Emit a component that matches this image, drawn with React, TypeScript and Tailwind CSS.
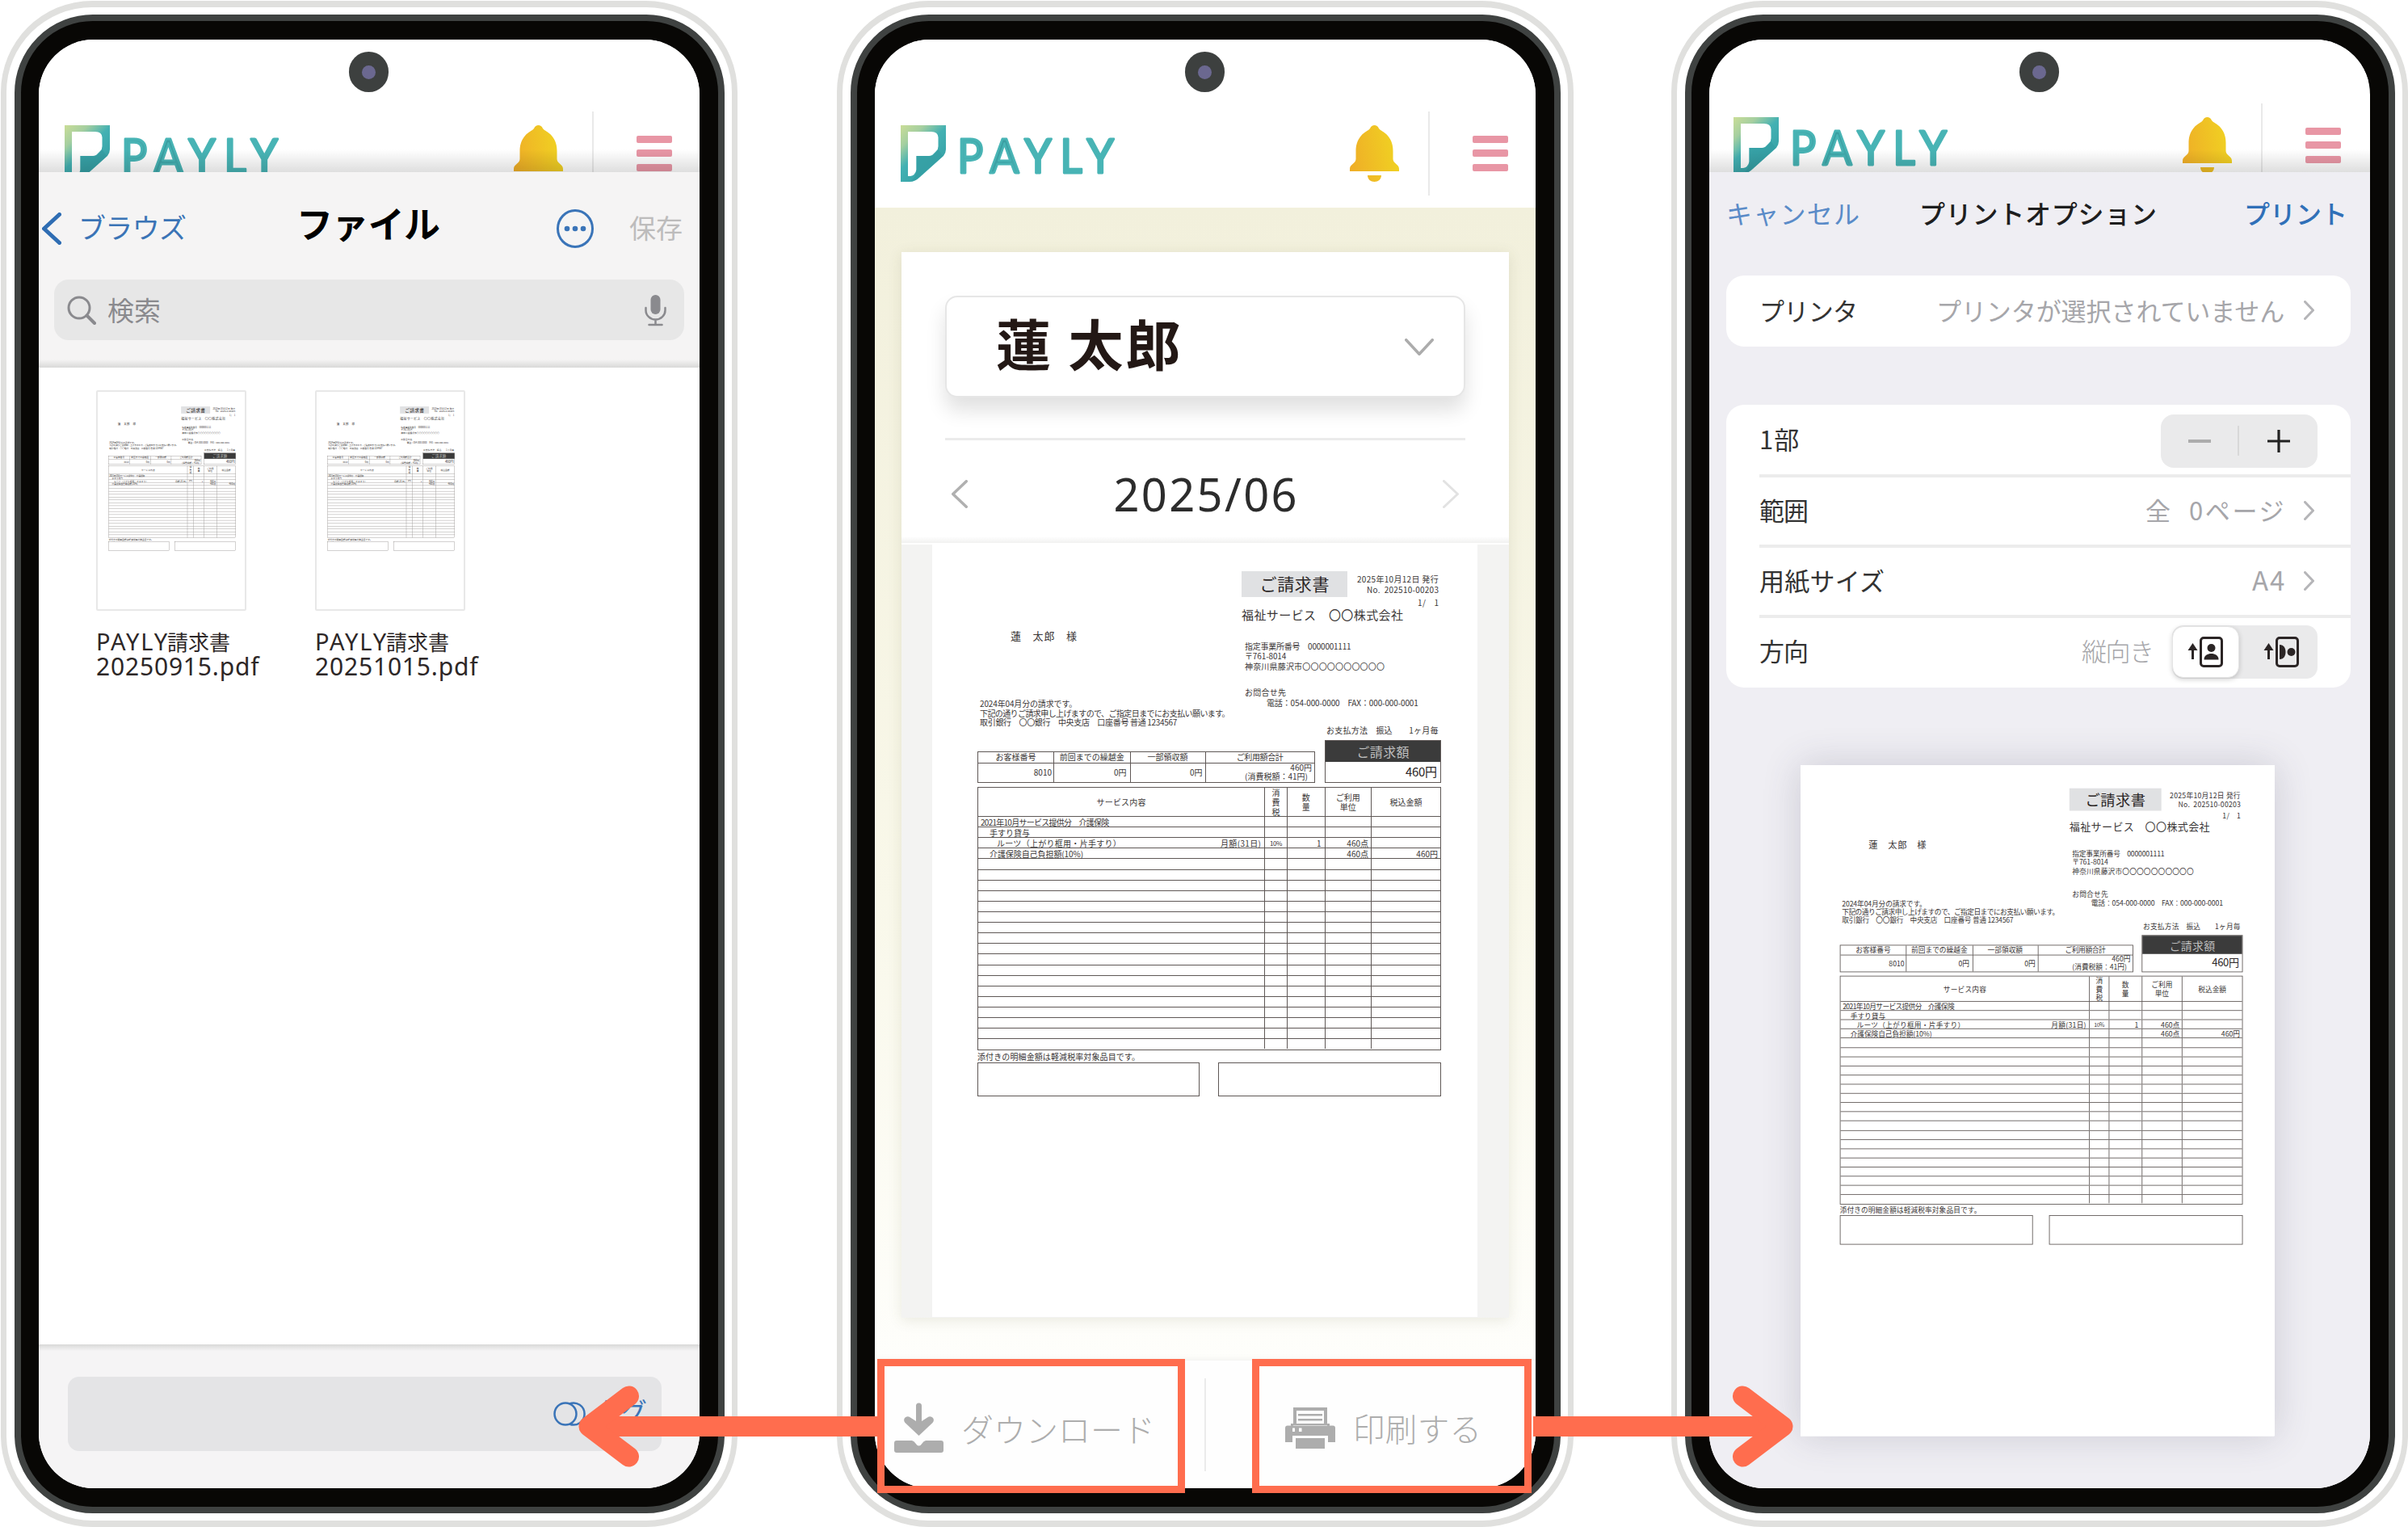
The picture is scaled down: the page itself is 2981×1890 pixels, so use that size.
import { useLayoutEffect, useRef, useState, type ReactNode } from "react";

/** Text whose tracking is adjusted so that it spans exactly `w` pixels. */
function Fit({ w, children, className = "" }: { w: number; children: string; className?: string }) {
  const ref = useRef<HTMLSpanElement>(null);
  const [spacing, setSpacing] = useState<number | null>(null);
  useLayoutEffect(() => {
    if (spacing !== null || !ref.current) return;
    const natural = ref.current.offsetWidth;
    setSpacing((w - natural) / Math.max(1, children.length - 1));
  }, [w, children, spacing]);
  return (
    <span
      ref={ref}
      className={`inline-block w-max shrink-0 whitespace-pre text-left align-top ${className}`}
      style={spacing === null ? undefined : { letterSpacing: `${spacing}px`, width: `${w}px` }}
    >
      {children}
    </span>
  );
}

function Phone({ children, className = "" }: { children: ReactNode; className?: string }) {
  return (
    <div
      className={`h-[1889px] w-[912px] shrink-0 rounded-[113px] border-x-[7px] border-y-[8px] border-[#e0e0de] bg-white py-[9px] pr-[9px] pl-[10px] ${className}`}
    >
      <div className="h-full w-full rounded-[97px] border-[8px] border-[#3f4241] bg-[#080705] py-[23px] pr-[23px] pl-[22px]">
        <div className="relative flex h-[1793px] w-full flex-col overflow-hidden rounded-[68px] bg-white">
          {children}
          <div className="absolute top-[15px] left-[384px] flex h-[50px] w-[49px] items-center justify-center rounded-full bg-[#3d403f]">
            <div className="h-[17px] w-[17px] rounded-full bg-[#6b6890]" />
          </div>
        </div>
      </div>
    </div>
  );
}

function Logo() {
  return (
    <svg width="268" height="70" viewBox="0 0 268 70" className="shrink-0 overflow-visible">
      <defs>
        <linearGradient id="mark" x1="0" y1="0" x2="0.75" y2="1">
          <stop offset="0" stopColor="#cadd97" />
          <stop offset="0.25" stopColor="#a5cfa0" />
          <stop offset="0.5" stopColor="#43b1b3" />
          <stop offset="0.8" stopColor="#39a5a9" />
          <stop offset="1" stopColor="#43b1b3" />
        </linearGradient>
        <linearGradient id="word" x1="0" y1="0" x2="1" y2="0">
          <stop offset="0" stopColor="#48b4b5" />
          <stop offset="0.3" stopColor="#3a9ea1" />
          <stop offset="0.4" stopColor="#48b4b5" />
        </linearGradient>
      </defs>
      <path
        fill="url(#mark)"
        fillRule="evenodd"
        d="M0 0H56V30Q56 34 53 38L24 64Q18 70 11 70H0ZM9 8V63H12Q18 62 19.500 55V38H35Q39 38 41 35L44 32Q46.500 30 46.500 26V15Q46 8 38 8Z"
      />
      <path fill="#349da3" d="M19.500 38H37Q40 38 42 35L46.500 30 52 38 24 63Q19 68 13 69 19.500 64 19.500 55Z" opacity="0.75" />
      <text
        x="77"
        y="59"
        transform="scale(0.91 1)"
        fontFamily="Lato, 'Noto Sans', sans-serif"
        fontSize="59"
        textLength="213"
        fill="url(#word)"
        stroke="#48b4b5"
        strokeWidth="2.8"
        strokeLinejoin="round"
      >
        PAYLY
      </text>
    </svg>
  );
}

function Bell() {
  return (
    <svg width="61" height="70" viewBox="0 0 61 70" className="shrink-0">
      <defs>
        <linearGradient id="bell" x1="0" y1="0.6" x2="1" y2="0.4">
          <stop offset="0" stopColor="#efae27" />
          <stop offset="1" stopColor="#f0d322" />
        </linearGradient>
      </defs>
      <path
        fill="url(#bell)"
        d="M30.500 0C28 0 26.500 1 25 4 23 7 18 8 14 13 9 19 7.500 25 7.500 32V42C7 48 0 48 0 54V57H61V54C61 48 54 48 53.500 42V32C53.500 25 52 19 47 13 43 8 38 7 36 4 34.500 1 33 0 30.500 0ZM22 62H39C39 67 35 70 30.500 70S22 67 22 62Z"
      />
    </svg>
  );
}

function AppHeader() {
  return (
    <header className="flex h-[208px] shrink-0 items-center bg-white pt-[73px] pr-[34px] pl-[32px]">
      <Logo />
      <div className="ml-auto flex items-center">
        <Bell />
        <div className="ml-[36px] h-[104px] w-[2px] bg-[#e9e9e9]" />
        <div className="ml-[53px] flex w-[44px] flex-col gap-[8.500px]">
          <div className="h-[9px] rounded-[2px] bg-[#e896a5]" />
          <div className="h-[9px] rounded-[2px] bg-[#e896a5]" />
          <div className="h-[9px] rounded-[2px] bg-[#e896a5]" />
        </div>
      </div>
    </header>
  );
}

/** The page header as seen behind a raised sheet. */
function CoveredHeader({ raised = false }: { raised?: boolean }) {
  return (
    <div className="relative h-[164px] shrink-0 overflow-hidden">
      <div className={raised ? "-mt-[10px] mr-[2px] -ml-[2px]" : ""}>
        <AppHeader />
      </div>
      <div className="absolute inset-x-0 bottom-0 h-[28px] bg-gradient-to-b from-transparent to-black/13" />
    </div>
  );
}

function Chevron({ dir, w, h, stroke }: { dir: "left" | "right" | "down"; w: number; h: number; stroke: number }) {
  const p = stroke / 2;
  const d =
    dir === "left"
      ? `M${w - p} ${p}L${p} ${h / 2}L${w - p} ${h - p}`
      : dir === "right"
        ? `M${p} ${p}L${w - p} ${h / 2}L${p} ${h - p}`
        : `M${p} ${p}L${w / 2} ${h - p}L${w - p} ${p}`;
  return (
    <svg width={w} height={h} viewBox={`0 0 ${w} ${h}`} className="block shrink-0">
      <path d={d} fill="none" stroke="currentColor" strokeWidth={stroke} strokeLinecap="round" strokeLinejoin="round" />
    </svg>
  );
}

/* ---------- Invoice sheet ---------- */

const HEAD = "flex items-center justify-center";
const LINE = "border-[#5f5856]";

function Cell({ children, className = "" }: { children?: ReactNode; className?: string }) {
  return <div className={`flex items-center overflow-visible border-r-[1.500px] ${LINE} ${className}`}>{children}</div>;
}

function DetailRow({ a, b, c, d, e, f }: { a?: ReactNode; b?: ReactNode; c?: ReactNode; d?: ReactNode; e?: ReactNode; f?: ReactNode }) {
  return (
    <div className={`grid h-[13.120px] grid-cols-[355px_28px_46.500px_57.500px_1fr] border-t-[1.500px] leading-[11px] ${LINE}`}>
      <Cell className="justify-between pr-[4px]">
        {a}
        {b}
      </Cell>
      <Cell className="justify-center">{c}</Cell>
      <Cell className="justify-end pr-[4px]">{d}</Cell>
      <Cell className="justify-end pr-[3px]">{e}</Cell>
      <div className="flex items-center justify-end pr-[3px]">{f}</div>
    </div>
  );
}

function Invoice() {
  return (
    <div className="h-[956px] w-[675px] bg-white text-[10px] text-[#3a3636]">
      <div className="flex h-[242px]">
        <div className="flex w-[383px] flex-col pt-[106px]">
          <Fit w={82} className="ml-[97px] text-[13px] leading-[14px]">蓮　太郎　様</Fit>
          <div className="mt-[71px] ml-[59px] flex flex-col leading-[11.700px]">
            <Fit w={120}>2024年04月分の請求です。</Fit>
            <Fit w={310}>下記の通りご請求申し上げますので、ご指定日までにお支払い願います。</Fit>
            <Fit w={244}>取引銀行　〇〇銀行　中央支店　口座番号 普通 1234567</Fit>
          </div>
        </div>
        <div className="flex w-[244px] flex-col pt-[32.700px]">
          <div className="flex h-[46.300px] justify-between">
            <div className="flex h-[32.300px] w-[131px] items-center justify-center bg-[#e0e1e3] text-[21px] leading-none text-[#2b2626]">
              <Fit w={86} className="-mt-px">ご請求書</Fit>
            </div>
            <div className="flex flex-col items-end pt-[3px] leading-[13px]">
              <Fit w={101}>2025年10月12日 発行</Fit>
              <Fit w={89}>No.  202510-00203</Fit>
              <Fit w={26} className="mt-[3px]">1/　1</Fit>
            </div>
          </div>
          <Fit w={200} className="text-[15px] leading-[15px]">福祉サービス　〇〇株式会社</Fit>
          <div className="mt-[26px] ml-[4px] flex flex-col leading-[12.500px]">
            <Fit w={132}>指定事業所番号　0000001111</Fit>
            <Fit w={51}>〒761-8014</Fit>
            <Fit w={173}>神奈川県藤沢市〇〇〇〇〇〇〇〇〇〇</Fit>
            <Fit w={51} className="mt-[20px]">お問合せ先</Fit>
            <Fit w={188} className="ml-[27px]">電話：054-000-0000　FAX：000-000-0001</Fit>
          </div>
          <Fit w={139} className="mt-[22px] self-end leading-[12.500px]">お支払方法　振込　　1ヶ月毎</Fit>
        </div>
      </div>

      <div className="ml-[56px] flex w-[574px] items-end justify-between">
        <div className={`h-[39px] w-[418px] border-[1.500px] ${LINE}`}>
          <div className="grid h-full grid-cols-[94px_94.500px_93px_1fr] grid-rows-[13.500px_1fr] leading-none">
            <Cell className="justify-center"><Fit w={50}>お客様番号</Fit></Cell>
            <Cell className="justify-center"><Fit w={80}>前回までの繰越金</Fit></Cell>
            <Cell className="justify-center"><Fit w={50}>一部領収額</Fit></Cell>
            <div className={HEAD}><Fit w={58}>ご利用額合計</Fit></div>
            <Cell className="justify-end border-t-[1.500px] pr-[2px]">8010</Cell>
            <Cell className="justify-end border-t-[1.500px] pr-[4px]">0円</Cell>
            <Cell className="justify-end border-t-[1.500px] pr-[3px]">0円</Cell>
            <div className={`flex flex-col items-end justify-between border-t-[1.500px] pr-[3px] pb-[2px] ${LINE}`}>
              <span>460円</span>
              <Fit w={78} className="mr-[5px]">(消費税額：41円)</Fit>
            </div>
          </div>
        </div>
        <div className={`h-[52.500px] w-[144px] border-[1.500px] ${LINE}`}>
          <div className="flex h-[26px] items-center justify-center bg-[#3b3b3b] text-[16px] leading-none text-[#bdbdbd]">
            <Fit w={65}>ご請求額</Fit>
          </div>
          <div className="flex h-[23px] items-center justify-end pr-[4px] text-[15px] leading-none text-[#2b2626]">
            <Fit w={39}>460円</Fit>
          </div>
        </div>
      </div>

      <div className={`mt-[5px] ml-[56px] h-[326px] w-[574px] border-[1.500px] ${LINE}`}>
        <div className="grid h-[35.500px] grid-cols-[355px_28px_46.500px_57.500px_1fr] text-center leading-[12px]">
          <Cell className="justify-center"><Fit w={61}>サービス内容</Fit></Cell>
          <Cell className="justify-center"><span className="w-[10px]">消費税</span></Cell>
          <Cell className="justify-center"><span className="w-[10px]">数量</span></Cell>
          <Cell className="justify-center"><span className="w-[30px]">ご利用単位</span></Cell>
          <div className={HEAD}>税込金額</div>
        </div>
        <DetailRow a={<Fit w={159} className="ml-[3px]">2021年10月サービス提供分　介護保険</Fit>} />
        <DetailRow a={<Fit w={50} className="ml-[14px]">手すり貸与</Fit>} />
        <DetailRow
          a={<Fit w={154} className="ml-[23px]">ルーツ（上がり框用・片手すり）</Fit>}
          b={<Fit w={50}>月額(31日)</Fit>}
          c={<Fit w={15} className="text-[8px]">10%</Fit>}
          d="1"
          e="460点"
        />
        <DetailRow a={<Fit w={116} className="ml-[14px]">介護保険自己負担額(10%)</Fit>} e="460点" f="460円" />
        {Array.from({ length: 18 }, (_, i) => (
          <DetailRow key={i} />
        ))}
      </div>

      <div className="ml-[56px] h-[15px] leading-[16px]">
        <Fit w={201}>添付きの明細金額は軽減税率対象品目です。</Fit>
      </div>
      <div className="ml-[56px] flex h-[42.500px] w-[574px] justify-between">
        <div className={`w-[275px] border-[1.500px] ${LINE}`} />
        <div className={`w-[276px] border-[1.500px] ${LINE}`} />
      </div>
    </div>
  );
}

/* ---------- Screen 1: saving to files ---------- */

function FileItem({ date }: { date: string }) {
  return (
    <div className="flex w-[205px] flex-col leading-[31px] text-[#2d2727]">
      <div className="h-[273px] w-[186px] overflow-hidden rounded-[2px] border-2 border-[#e8e8e8] pt-[9px]">
        <div className="-ml-[2px] h-[250px] w-[185px]">
          <div className="w-[675px] origin-top-left scale-[0.2746]">
            <Invoice />
          </div>
        </div>
      </div>
      <div className="mt-[22px] flex">
        <Fit w={88} className="font-['Noto_Sans'] text-[29px]">PAYLY</Fit>
        <Fit w={78} className="text-[26px]">請求書</Fit>
      </div>
      <Fit w={202} className="font-['Noto_Sans'] text-[30px]">{`${date}.pdf`}</Fit>
    </div>
  );
}

function FilesScreen() {
  return (
    <>
      <CoveredHeader />
      <div className="h-[242px] shrink-0 bg-[#f5f4f4]">
        <div className="flex h-[133px] items-center pl-[4px]">
          <span className="mt-[6px] text-[#2f6db3]">
            <Chevron dir="left" w={24} h={40} stroke={5} />
          </span>
          <Fit w={134} className="mt-[2px] ml-[21px] text-[34px] leading-none text-[#3b74b6]">ブラウズ</Fit>
          <Fit w={178} className="-mt-[8px] ml-[136px] text-[45px] leading-none font-bold text-black">ファイル</Fit>
          <svg width="46" height="48" viewBox="0 0 46 48" className="mt-[6px] ml-[144px]">
            <ellipse cx="23" cy="24" rx="21.500" ry="22.500" fill="none" stroke="#3a74b8" strokeWidth="3" />
            <circle cx="13" cy="24" r="3.300" fill="#3a74b8" />
            <circle cx="23" cy="24" r="3.300" fill="#3a74b8" />
            <circle cx="33" cy="24" r="3.300" fill="#3a74b8" />
          </svg>
          <Fit w={66} className="mt-[3px] ml-[44px] text-[33px] leading-none text-[#bdbcbc]">保存</Fit>
        </div>
        <div className="mx-[19px] flex h-[75px] items-center rounded-[18px] bg-[#e7e7e7] pr-[22px] pl-[16px] text-[#8a8a8e]">
          <svg width="36" height="36" viewBox="0 0 36 36" fill="none" stroke="currentColor" strokeWidth="3" strokeLinecap="round">
            <circle cx="15" cy="15" r="13" />
            <path d="M24.500 24.500L34 34" strokeWidth="4" />
          </svg>
          <Fit w={66} className="ml-[14px] text-[33px] leading-none">検索</Fit>
          <svg width="27" height="40" viewBox="0 0 27 40" className="ml-auto" fill="none" stroke="currentColor" strokeWidth="2.500" strokeLinecap="round">
            <rect x="7.500" y="1" width="12" height="24" rx="6" fill="currentColor" stroke="none" />
            <path d="M1.500 17V20A12 11.500 0 0 0 25.500 20V17M13.500 32V38M5.500 38H21.500" />
          </svg>
        </div>
        <div className="mt-[24px] h-[10px] bg-gradient-to-b from-[#f5f4f4] to-[#d9d9d8]" />
      </div>
      <div className="flex grow gap-[66px] pt-[28px] pl-[71px]">
        <FileItem date="20250915" />
        <FileItem date="20251015" />
      </div>
      <div className="h-[178px] shrink-0 bg-[#f5f4f5]">
        <div className="h-[8px] bg-gradient-to-b from-[#d9d9d8] to-[#f5f4f5]" />
        <div className="mt-[32px] mr-[47px] ml-[36px] flex h-[92px] items-center justify-end rounded-[14px] bg-[#e4e4e6] pr-[18px] text-[#3a74b8]">
          <svg width="40" height="30" viewBox="0 0 40 30" fill="none" stroke="currentColor" strokeWidth="2.500">
            <circle cx="15" cy="15" r="13.500" />
            <path d="M20 2.500A13.500 13.500 0 1 1 20 27.500" />
          </svg>
          <Fit w={66} className="-mt-[8px] ml-[10px] text-[33px] leading-none">タグ</Fit>
        </div>
      </div>
    </>
  );
}

/* ---------- Screen 2: invoice viewer ---------- */

function ViewerScreen() {
  return (
    <>
      <AppHeader />
      <div className="h-[1427px] shrink-0 bg-gradient-to-b from-[#f2f0dc] via-[#f9f8ea] via-60% to-[#fefefb] pt-[55px]">
        <div className="ml-[33px] h-[1319px] w-[752px] bg-white shadow-[0_3px_16px_rgba(90,90,50,0.13)]">
          <div className="h-[362px] px-[54px] pt-[54px]">
            <div className="flex h-[126px] items-center justify-between rounded-[15px] border-2 border-[#e6e6e6] bg-white pr-[37px] pl-[61px] shadow-[0_16px_24px_rgba(0,0,0,0.12)]">
              <Fit w={228} className="-mt-[11px] text-[68px] leading-none font-bold text-[#231815]">蓮 太郎</Fit>
              <span className="text-[#acacac]">
                <Chevron dir="down" w={36} h={21} stroke={3.5} />
              </span>
            </div>
            <div className="mt-[50px] h-[3px] bg-[#ebebeb]" />
            <div className="mt-[45px] flex items-center justify-between px-[8px]">
              <span className="text-[#b0b0b0]">
                <Chevron dir="left" w={20} h={35} stroke={3.5} />
              </span>
              <Fit w={227} className="font-['Noto_Sans'] text-[56px] leading-[42px] text-[#2c2c2c]">2025/06</Fit>
              <span className="text-[#e2e2e2]">
                <Chevron dir="right" w={20} h={35} stroke={3} />
              </span>
            </div>
            <div className="-mx-[54px] mt-[32px] h-[8px] bg-gradient-to-b from-white to-[#f1f1f0]" />
          </div>
          <div className="h-[957px] bg-[#f3f3f2] pl-[38px]">
            <Invoice />
          </div>
        </div>
      </div>
      <div className="flex h-[158px] shrink-0 items-center bg-[#fefefe] pl-[24px] text-[#adadad] shadow-[0_-2px_8px_rgba(0,0,0,0.05)]">
        <svg width="61" height="62" viewBox="0 0 61 62" fill="currentColor" className="mt-[8px]">
          <path d="M27 4a3.500 3.500 0 0 1 7 0V23L41 18.500Q45 16 48 19 50 22 47.500 25L30.500 41 13.500 25Q11 22 13 19 16 16 20 18.500L27 23Z" />
          <path d="M3 47H22Q25 48 26 50 30.500 57 35 50 36 48 39 47H58Q61 47 61 50V59Q61 62 58 62H3Q0 62 0 59V50Q0 47 3 47Z" />
        </svg>
        <Fit w={240} className="mt-[9px] ml-[22px] text-[40px] leading-none font-light">ダウンロード</Fit>
        <div className="ml-[61px] h-[115px] w-[2px] bg-[#ebebeb]" />
        <svg width="62" height="51" viewBox="0 0 62 51" fill="currentColor" className="mt-[8px] ml-[98px]">
          <path fillRule="evenodd" d="M10 0H52V22H10ZM14 4V20H48V4Z" />
          <path d="M16 8H46V10.500H16ZM16 14H46V16.500H16Z" />
          <path
            fillRule="evenodd"
            d="M3 22.500H7V20H10V22.500H52V20H55V22.500H59Q62 22.500 62 25.500V43H53V35H9V43H0V25.500Q0 22.500 3 22.500ZM9 25.500V30H12V25.500ZM17 25.500V30H20.500V25.500Z"
          />
          <path d="M13 38H49V51H13Z" />
        </svg>
        <Fit w={159} className="mt-[8px] ml-[22px] text-[39.500px] leading-none font-light">印刷する</Fit>
      </div>
    </>
  );
}

/* ---------- Screen 3: print options ---------- */

function OptionRow({ label, w, className = "", children }: { label: string; w: number; className?: string; children: ReactNode }) {
  return (
    <div className={`ml-[41px] flex items-center justify-between pr-[41px] text-[31px] leading-none text-[#333] ${className}`}>
      <Fit w={w} className="-mt-[4px]">{label}</Fit>
      <div className="flex items-center text-[#a6a6aa]">{children}</div>
    </div>
  );
}

function RowChevron() {
  return (
    <span className="-mt-[2px] mr-[4px] ml-[24px] text-[#b5b5b8]">
      <Chevron dir="right" w={13} h={24} stroke={3} />
    </span>
  );
}

function PageIcon({ rotated = false }: { rotated?: boolean }) {
  return (
    <svg width="45" height="40" viewBox="0 0 45 40" className="text-[#2b2525]">
      <path d="M6.500 29V14" stroke="currentColor" strokeWidth="3" />
      <path d="M6.500 9L12.500 18H0.500Z" fill="currentColor" />
      <rect x="16.500" y="2.500" width="26" height="35" rx="3.500" fill="none" stroke="currentColor" strokeWidth="3" />
      <g transform={rotated ? "rotate(90 29.500 20)" : undefined} fill="currentColor">
        <circle cx="29.500" cy="15" r="5" />
        <path d="M20.500 29.500C20.500 24 25 22 29.500 22S38.500 24 38.500 29.500Z" />
      </g>
    </svg>
  );
}

function PrintScreen() {
  return (
    <>
      <CoveredHeader raised />
      <div className="grow bg-[#efeef3]">
        <div className="flex h-[128px] items-start pt-[34px] pl-[21px] leading-none">
          <Fit w={165} className="text-[32px] text-[#5a8bc8]">キャンセル</Fit>
          <Fit w={294} className="ml-[74px] text-[32px] font-medium text-[#1e1e1e]">プリントオプション</Fit>
          <Fit w={128} className="ml-[108px] text-[32px] font-medium text-[#3070b8]">プリント</Fit>
        </div>
        <div className="mr-[24px] ml-[21px] h-[88px] rounded-[22px] bg-white">
          <OptionRow label="プリンタ" w={122} className="h-full">
            <Fit w={431} className="-mt-[4px]">プリンタが選択されていません</Fit>
            <RowChevron />
          </OptionRow>
        </div>
        <div className="mt-[72px] mr-[24px] ml-[21px] flex h-[350px] flex-col rounded-[22px] bg-white">
          <OptionRow label="1部" w={49} className="h-[86px]">
            <div className="mt-[3px] flex h-[66px] w-[194px] items-center rounded-[16px] bg-[#eaeaeb]">
              <div className="flex grow justify-center">
                <div className="h-[4px] w-[28px] bg-[#acacac]" />
              </div>
              <div className="h-[37px] w-[2px] bg-[#d8d8d8]" />
              <div className="flex grow justify-center">
                <svg width="30" height="30" viewBox="0 0 30 30" stroke="#222" strokeWidth="3.200">
                  <path d="M15 1V29M1 15H29" />
                </svg>
              </div>
            </div>
          </OptionRow>
          <div className="ml-[41px] h-[4px] bg-[#ececec]" />
          <OptionRow label="範囲" w={61} className="h-[83px]">
            <Fit w={31} className="-mt-[4px]">全</Fit>
            <Fit w={118} className="-mt-[4px] ml-[23px]">0ページ</Fit>
            <RowChevron />
          </OptionRow>
          <div className="ml-[41px] h-[4px] bg-[#ececec]" />
          <OptionRow label="用紙サイズ" w={155} className="h-[83px]">
            <Fit w={40} className="-mt-[4px] text-[33px]">A4</Fit>
            <RowChevron />
          </OptionRow>
          <div className="ml-[41px] h-[4px] bg-[#ececec]" />
          <OptionRow label="方向" w={61} className="h-[83px]">
            <Fit w={90} className="-mt-[4px] font-light">縦向き</Fit>
            <div className="ml-[22px] flex h-[66px] w-[180px] items-center justify-between rounded-[14px] bg-[#eaeaeb] pr-[22px]">
              <div className="flex h-[64px] w-[83px] items-center justify-center rounded-[14px] border border-[#e4e4e4] bg-white shadow-[0_2px_6px_rgba(0,0,0,0.18)]">
                <PageIcon />
              </div>
              <PageIcon rotated />
            </div>
          </OptionRow>
        </div>
        <div className="mt-[96px] ml-[113px] h-[830px] w-[587px] bg-white shadow-[0_0_44px_rgba(60,60,90,0.2)]">
          <div className="h-[830px] w-[587px]">
            <div className="w-[675px] origin-top-left scale-[0.869]">
              <Invoice />
            </div>
          </div>
        </div>
      </div>
    </>
  );
}

/* ---------- Annotations ---------- */

function Arrow({ flip = false, length }: { flip?: boolean; length: number }) {
  return (
    <svg width={length} height="102" viewBox={`0 0 ${length} 102`} className={`block ${flip ? "-scale-x-100" : ""}`}>
      <path d={`M13 50.500H${length}`} stroke="#ff6d4e" strokeWidth="25" />
      <path d="M62.500 13L13 50.500 62.500 88" fill="none" stroke="#ff6d4e" strokeWidth="25" strokeLinecap="round" strokeLinejoin="round" />
    </svg>
  );
}

export default function App() {
  return (
    <main className="relative flex h-[1890px] w-[2981px] overflow-hidden bg-white pt-px pl-px font-['Noto_Sans_CJK_JP',sans-serif]">
      <Phone>
        <FilesScreen />
      </Phone>
      <Phone className="ml-[123px]">
        <ViewerScreen />
      </Phone>
      <Phone className="ml-[121px]">
        <PrintScreen />
      </Phone>

      <div className="absolute top-[1682px] left-[1086px] h-[166px] w-[381px] border-[9px] border-[#ff6d4e]" />
      <div className="absolute top-[1682px] left-[1550px] h-[166px] w-[346px] border-[9px] border-[#ff6d4e]" />
      <div className="absolute top-[1715px] left-[716px]">
        <Arrow length={371} />
      </div>
      <div className="absolute top-[1715px] left-[1898px]">
        <Arrow flip length={322} />
      </div>
    </main>
  );
}
